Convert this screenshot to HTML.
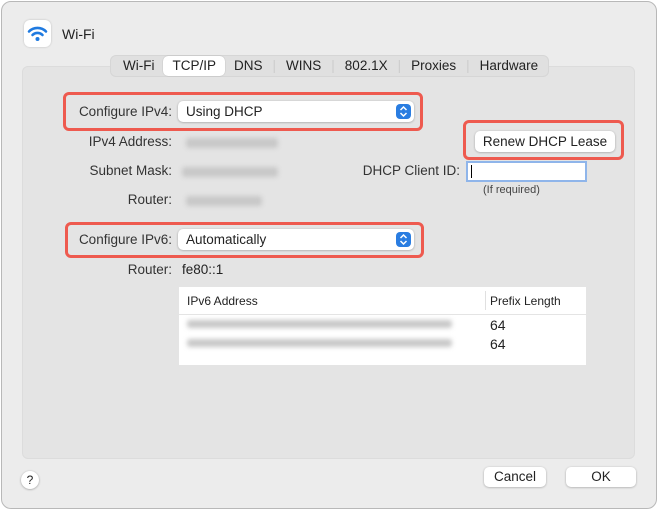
<!DOCTYPE html>
<html><head><style>
*{box-sizing:border-box;margin:0;padding:0}
body{width:658px;height:510px;background:#fff;font-family:"Liberation Sans",sans-serif;font-size:13px;color:#222;position:relative;overflow:hidden}
.win{position:absolute;left:1px;top:1px;width:656px;height:508px;background:#ececec;border:1px solid #b8b8b8;border-radius:10px}
.a{position:absolute;white-space:nowrap}
.panel{left:22px;top:66px;width:613px;height:393px;background:#e4e4e4;border-radius:6px;border:1px solid #dcdcdc}
.tabs{left:110px;top:55px;width:439px;height:22px;background:#e0e0e0;border-radius:6px;border:1px solid #d6d6d6;display:flex;align-items:center;font-size:13.5px;padding-left:3px}
.tabs span{padding:0 9px;height:20px;line-height:20px;border-radius:5px;white-space:nowrap}
.tabs .sep{color:#ccc;padding:0 1px}
.tabs .sel{background:#fff;box-shadow:0 0 1px rgba(0,0,0,.3)}
.red{border:3px solid #ee5a4f;border-radius:6px}
.pop{background:#fff;border-radius:5px;box-shadow:0 0.5px 2px rgba(0,0,0,.3);height:21px;line-height:21px;padding-left:8px;font-size:13.5px}
.arr{position:absolute;right:3px;top:3px;width:15px;height:15px;background:#2a7de1;border-radius:4px}
.lbl{text-align:right;font-size:13.5px;color:#333}
.blur{height:10px;background:#c8c8c8;filter:blur(2.5px);border-radius:3px}
.btn{background:#fff;border-radius:5px;box-shadow:0 0.5px 2px rgba(0,0,0,.3);text-align:center;font-size:13.5px}
</style></head><body>
<div class="win"></div>
<div class="a" style="left:24px;top:20px;width:27px;height:27px;background:#fff;border-radius:6px;box-shadow:0 0 2px rgba(0,0,0,.2)">
<svg width="27" height="27" viewBox="0 0 27 27"><g fill="none" stroke="#1f7ae0" stroke-width="2.6" stroke-linecap="round"><path d="M5 11.5a12 12 0 0 1 17 0"/><path d="M8.5 15a7 7 0 0 1 10 0"/></g><circle cx="13.5" cy="19" r="2" fill="#1f7ae0"/></svg></div>
<div class="a" style="left:62px;top:26px;font-size:14px">Wi-Fi</div>
<div class="a panel"></div>
<div class="a tabs"><span>Wi-Fi</span><span class="sel">TCP/IP</span><span>DNS</span><span class="sep">|</span><span>WINS</span><span class="sep">|</span><span>802.1X</span><span class="sep">|</span><span>Proxies</span><span class="sep">|</span><span>Hardware</span></div>

<div class="a red" style="left:63px;top:92px;width:360px;height:39px"></div>
<div class="a lbl" style="left:60px;top:104px;width:112px">Configure IPv4:</div>
<div class="a pop" style="left:178px;top:101px;width:236px">Using DHCP<div class="arr"><svg width="15" height="15"><path d="M4.5 6l3-3 3 3M4.5 9l3 3 3-3" fill="none" stroke="#fff" stroke-width="1.5"/></svg></div></div>

<div class="a lbl" style="left:50px;top:134px;width:122px">IPv4 Address:</div>
<div class="a blur" style="left:186px;top:138px;width:92px"></div>
<div class="a lbl" style="left:50px;top:163px;width:122px">Subnet Mask:</div>
<div class="a blur" style="left:182px;top:167px;width:96px"></div>
<div class="a lbl" style="left:50px;top:192px;width:122px">Router:</div>
<div class="a blur" style="left:186px;top:196px;width:76px"></div>

<div class="a red" style="left:463px;top:120px;width:161px;height:40px"></div>
<div class="a btn" style="left:475px;top:131px;width:140px;height:21px;line-height:21px">Renew DHCP Lease</div>
<div class="a lbl" style="left:330px;top:163px;width:130px">DHCP Client ID:</div>
<div class="a" style="left:466px;top:161px;width:121px;height:21px;background:#fff;border:2px solid #8fb5ea"><div style="position:absolute;left:3px;top:2px;width:1px;height:13px;background:#000"></div></div>
<div class="a" style="left:483px;top:184px;font-size:11px;color:#444">(If required)</div>

<div class="a red" style="left:65px;top:222px;width:359px;height:36px"></div>
<div class="a lbl" style="left:60px;top:232px;width:112px">Configure IPv6:</div>
<div class="a pop" style="left:178px;top:229px;width:236px">Automatically<div class="arr"><svg width="15" height="15"><path d="M4.5 6l3-3 3 3M4.5 9l3 3 3-3" fill="none" stroke="#fff" stroke-width="1.5"/></svg></div></div>
<div class="a lbl" style="left:50px;top:262px;width:122px">Router:</div>
<div class="a" style="left:182px;top:262px;font-size:13.5px">fe80::1</div>

<div class="a" style="left:179px;top:287px;width:407px;height:78px;background:#fff">
<div class="a" style="left:8px;top:7px;font-size:12px">IPv6 Address</div>
<div class="a" style="left:306px;top:4px;width:1px;height:19px;background:#e0e0e0"></div>
<div class="a" style="left:311px;top:7px;font-size:12px">Prefix Length</div>
<div class="a" style="left:0;top:27px;width:407px;height:1px;background:#e4e4e4"></div>
<div class="a blur" style="left:8px;top:33px;width:265px;height:8px"></div>
<div class="a blur" style="left:8px;top:52px;width:265px;height:8px"></div>
<div class="a" style="left:311px;top:30px;font-size:14px">64</div>
<div class="a" style="left:311px;top:49px;font-size:14px">64</div>
</div>

<div class="a" style="left:21px;top:471px;width:18px;height:18px;border-radius:50%;background:#fff;box-shadow:0 0.5px 2px rgba(0,0,0,.35);text-align:center;line-height:18px;font-size:12px">?</div>
<div class="a btn" style="left:484px;top:467px;width:62px;height:20px;line-height:20px">Cancel</div>
<div class="a btn" style="left:566px;top:467px;width:70px;height:20px;line-height:20px">OK</div>
</body></html>
